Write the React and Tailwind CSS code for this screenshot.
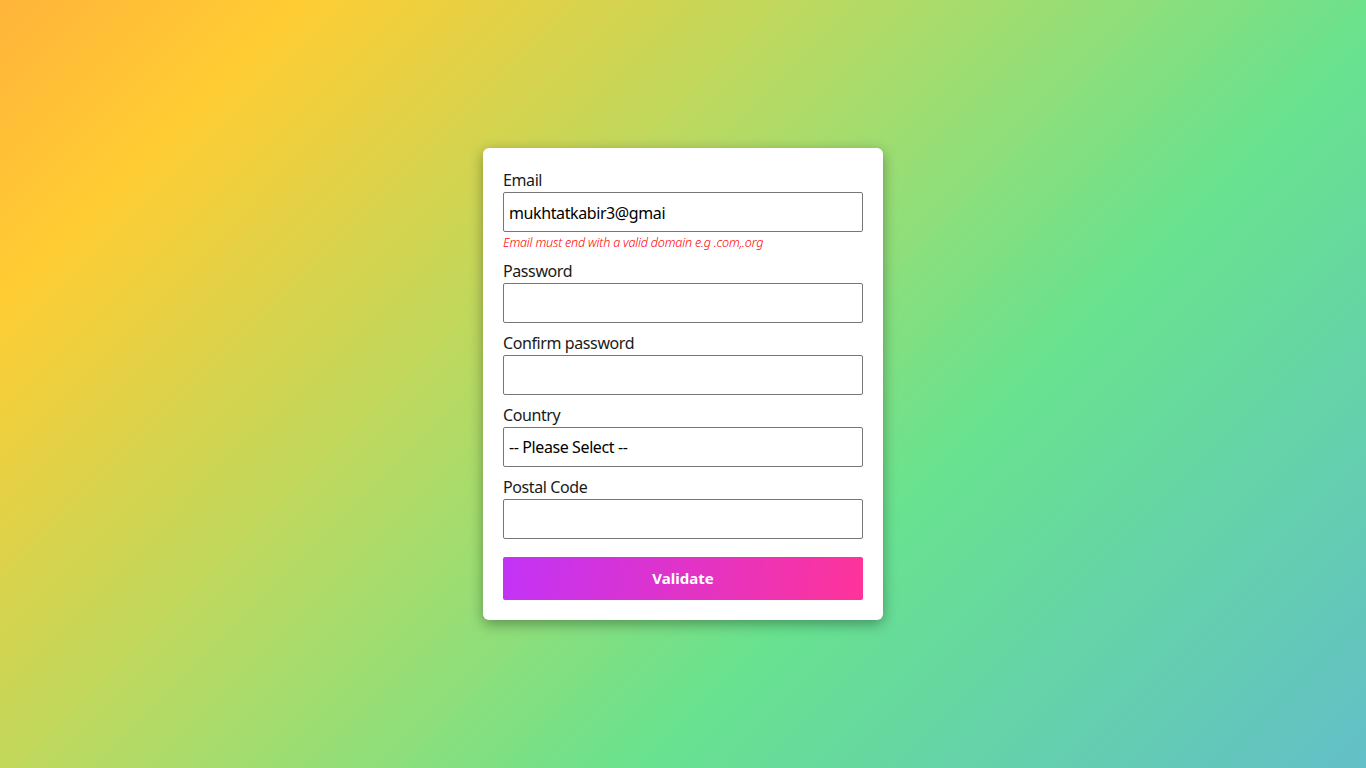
import React, { useState } from "react";

export default function App() {
    const [form, setForm] = useState({
        email: "mukhtatkabir3@gmai",
        password: "",
        confirm: "",
        country: "",
        postal: "",
    });

    const handleChange = (e) => {
        const { name, value } = e.target;
        setForm((prev) => ({ ...prev, [name]: value }));
    };

    const labelClass = "block text-base leading-6 text-[#1a1a1a] tracking-[-0.4px]";
    const fieldClass =
        "block w-full h-10 border border-[#767676] rounded-[2px] bg-white px-[5px] text-base text-black tracking-[-0.4px] outline-none";
    const inputClass = `${fieldClass} pt-[2px]`;

    return (
        <div className="min-h-screen w-full flex items-center justify-center bg-[linear-gradient(135deg,#ffb43a_0%,#ffcc33_14%,#a8dc6c_45%,#68e28f_66%,#62bfc8_100%)] font-['Noto_Sans',sans-serif]">
            <form
                className="w-[400px] bg-white rounded-md p-5 shadow-[0_4px_14px_rgba(0,0,0,0.35)]"
                onSubmit={(e) => e.preventDefault()}
            >
                {/* Email */}
                <label className={labelClass}>Email</label>
                <input type="text" name="email" value={form.email} onChange={handleChange} className={inputClass} />
                <p className="mt-[2px] h-[17px] text-[12.6px] leading-[17px] italic font-light text-[#ff0000] tracking-[-0.2px]">
                    Email must end with a valid domain e.g .com,.org
                </p>

                {/* Password */}
                <label className={`${labelClass} mt-2`}>Password</label>
                <input type="password" name="password" value={form.password} onChange={handleChange} className={inputClass} />

                {/* Confirm */}
                <label className={`${labelClass} mt-2`}>Confirm password</label>
                <input type="password" name="confirm" value={form.confirm} onChange={handleChange} className={inputClass} />

                {/* Country */}
                <label className={`${labelClass} mt-2`}>Country</label>
                <select name="country" value={form.country} onChange={handleChange} className={`${fieldClass} appearance-none`}>
                    <option value="">-- Please Select --</option>
                    <option value="ng">Nigeria</option>
                    <option value="gh">Ghana</option>
                    <option value="us">United States</option>
                </select>

                {/* Postal code */}
                <label className={`${labelClass} mt-2`}>Postal Code</label>
                <input type="text" name="postal" value={form.postal} onChange={handleChange} className={inputClass} />

                <button
                    type="submit"
                    className="mt-[18px] block w-full h-[43px] rounded-[2px] bg-[linear-gradient(100deg,#c233f7_0%,#ff3399_100%)] text-white text-[15px] font-bold"
                >
                    Validate
                </button>
            </form>
        </div>
    );
}
